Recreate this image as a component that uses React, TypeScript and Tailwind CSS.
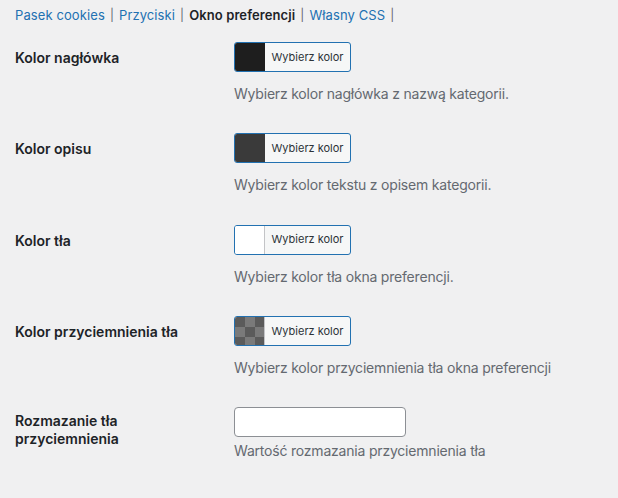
import React from "react";

const font = { fontFamily: "Inter, 'Noto Sans', sans-serif" };

function ColorButton({ swatch }: { swatch: "dark" | "mid" | "white" | "checker" }) {
  let sw: React.ReactNode;
  if (swatch === "checker") {
    sw = (
      <div
        className="w-[30px] h-full border-r border-[#c3c4c7] bg-[#5b5b5b]"
        style={{
          backgroundImage:
            "linear-gradient(45deg, #7a7a7a 25%, transparent 25%, transparent 75%, #7a7a7a 75%), linear-gradient(45deg, #7a7a7a 25%, transparent 25%, transparent 75%, #7a7a7a 75%)",
          backgroundSize: "20px 20px",
          backgroundPosition: "0 0, 10px 10px",
        }}
      />
    );
  } else {
    const cls =
      swatch === "dark"
        ? "bg-[#1e1e1e]"
        : swatch === "mid"
        ? "bg-[#3a3a3a]"
        : "bg-white border-r border-[#c3c4c7]";
    sw = <div className={`w-[30px] h-full ${cls}`} />;
  }
  return (
    <div className="flex h-[30px] w-[117px] items-stretch overflow-hidden rounded-[3px] border border-[#2271b1] bg-[#f6f7f7]">
      {sw}
      <div className="flex flex-1 items-center justify-center text-[11px] text-[#2c3338]">Wybierz kolor</div>
    </div>
  );
}

function Row({
  label,
  desc,
  swatch,
}: {
  label: string;
  desc: string;
  swatch: "dark" | "mid" | "white" | "checker";
}) {
  return (
    <div className="flex pb-[29.25px]">
      <div className="w-[219px] pt-[6px] text-[14px] leading-5 font-semibold text-[#1d2327]">{label}</div>
      <div className="flex flex-col">
        <ColorButton swatch={swatch} />
        <div className="mt-[12px] text-[14px] leading-5 tracking-[-0.2px] text-[#646970]">{desc}</div>
      </div>
    </div>
  );
}

function Sep() {
  return <span className="mx-[5px] text-[12px] text-[#646970]">|</span>;
}

export default function App() {
  return (
    <div className="min-h-[498px] w-full bg-[#f0f0f1] pl-[15px]" style={font}>
      <div className="flex items-center pt-[5px] text-[13px] leading-5 tracking-[0.1px] text-[#2271b1]">
        <span>Pasek cookies</span>
        <Sep />
        <span>Przyciski</span>
        <Sep />
        <span className="font-semibold text-[#1d2327]">Okno preferencji</span>
        <Sep />
        <span>Własny CSS</span>
        <Sep />
      </div>
      <div className="pt-[17px]">
        <Row label="Kolor nagłówka" desc="Wybierz kolor nagłówka z nazwą kategorii." swatch="dark" />
        <Row label="Kolor opisu" desc="Wybierz kolor tekstu z opisem kategorii." swatch="mid" />
        <Row label="Kolor tła" desc="Wybierz kolor tła okna preferencji." swatch="white" />
        <Row
          label="Kolor przyciemnienia tła"
          desc="Wybierz kolor przyciemnienia tła okna preferencji"
          swatch="checker"
        />
        <div className="flex">
          <div className="w-[219px] pt-[5px] text-[14px] leading-[18px] font-semibold text-[#1d2327]">
            Rozmazanie tła
            <br />
            przyciemnienia
          </div>
          <div className="flex flex-col">
            <input
              type="text"
              className="h-[30px] w-[172px] rounded-[4px] border border-[#8c8f94] bg-white px-2 text-[14px] outline-none"
            />
            <div className="mt-[4px] text-[14px] leading-5 tracking-[-0.2px] text-[#646970]">Wartość rozmazania przyciemnienia tła</div>
          </div>
        </div>
      </div>
    </div>
  );
}
